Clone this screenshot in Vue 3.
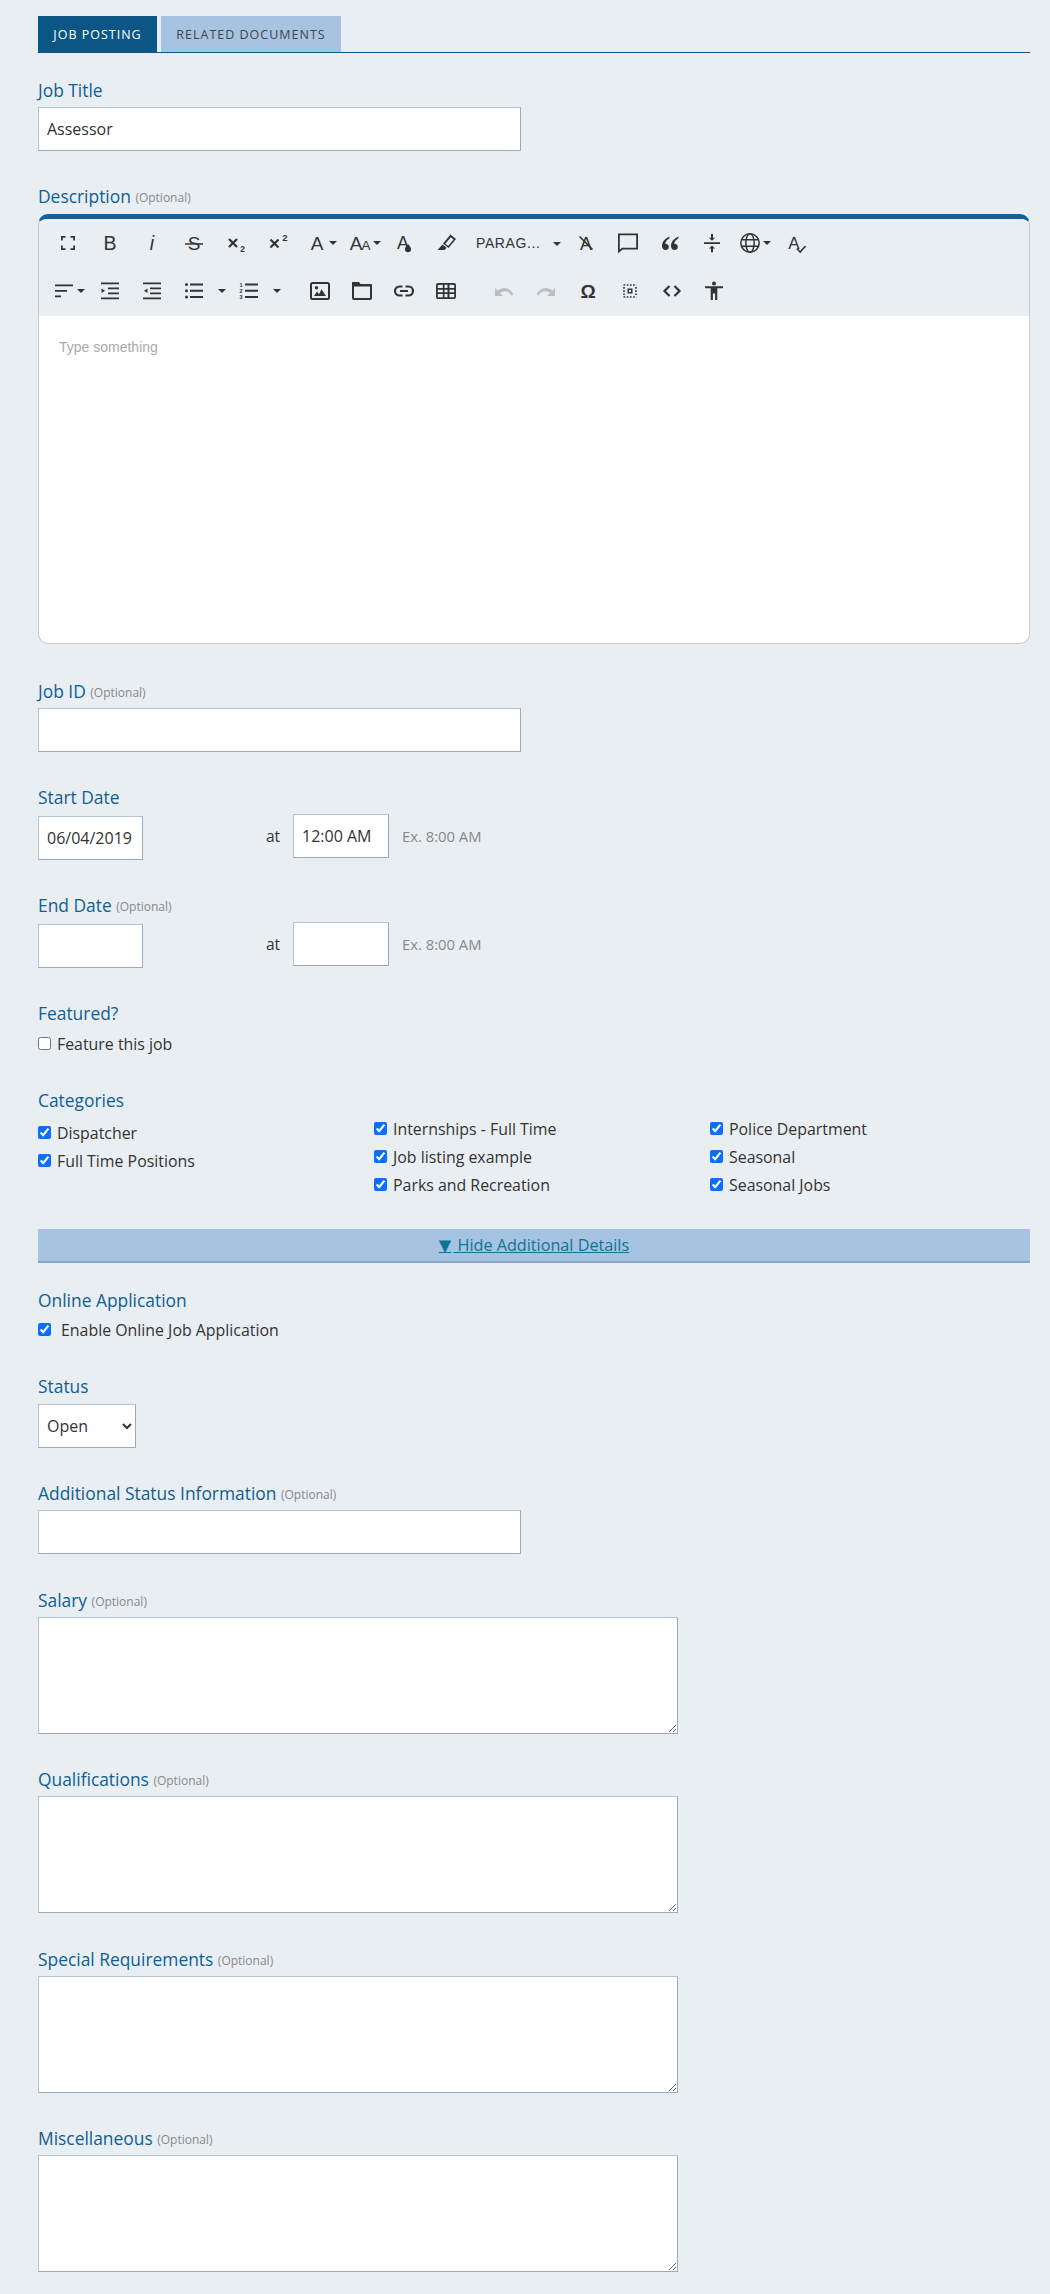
<script setup>
const cols = [
  { cls: 'col-a', items: ['Dispatcher', 'Full Time Positions'] },
  { cls: 'col-b', items: ['Internships - Full Time', 'Job listing example', 'Parks and Recreation'] },
  { cls: 'col-b', items: ['Police Department', 'Seasonal', 'Seasonal Jobs'] },
]
const areas = ['Salary', 'Qualifications', 'Special Requirements', 'Miscellaneous']
</script>

<template>
  <main class="page">
    <nav class="tabs">
      <a class="tab active">JOB POSTING</a>
      <a class="tab">RELATED DOCUMENTS</a>
    </nav>

    <section class="field f-title">
      <label class="lab">Job Title</label>
      <input class="inp wide" value="Assessor" />
    </section>

    <section class="field f-desc">
      <label class="lab">Description <small>(Optional)</small></label>
      <div class="editor">
        <div class="toolbar">
          <div class="tb-row">
            <span class="btn"><svg viewBox="0 0 24 24"><path d="M5 9.500V5h4.500v1.800H6.800v2.700zM14.500 5H19v4.500h-1.800V6.800h-2.700zM5 14.500h1.800v2.700h2.700V19H5zM17.200 14.500H19V19h-4.500v-1.800h2.700z"/></svg></span>
            <span class="btn"><svg viewBox="0 0 24 24"><text x="12" y="19" class="g" font-size="19.500">B</text></svg></span>
            <span class="btn"><svg viewBox="0 0 24 24"><text x="12" y="19" class="g" font-size="19.500" font-style="italic">i</text></svg></span>
            <span class="btn"><svg viewBox="0 0 24 24"><text x="12" y="19" class="g" font-size="19">S</text><rect x="3" y="12.200" width="18" height="1.500"/></svg></span>
            <span class="btn w43"><svg viewBox="0 0 24 24"><path class="st" d="M4 8l8 8M12 8l-8 8"/><text x="17.500" y="20.500" class="g" font-size="8.500" font-weight="700">2</text></svg></span>
            <span class="btn"><svg viewBox="0 0 24 24"><path class="st" d="M3.500 8.500l8 8M11.500 8.500l-8 8"/><text x="17.800" y="10" class="g" font-size="9.500" font-weight="700">2</text></svg></span>
            <span class="btn dd a-dd"><svg viewBox="0 0 24 24"><text x="12" y="19" class="g" font-size="19">A</text></svg><i class="caret"></i></span>
            <span class="btn dd aa-dd"><svg viewBox="0 0 24 24"><text x="9" y="19" class="g" font-size="19">A</text><text x="19" y="19" class="g" font-size="13.500">A</text></svg><i class="caret"></i></span>
            <span class="btn"><svg viewBox="0 0 24 24"><text x="11" y="17.500" class="g" font-size="18">A</text><path d="M16 13c1.400 2 3 3.200 3 5.200a3 3 0 0 1-6 0c0-2 1.600-3.200 3-5.200z"/></svg></span>
            <span class="btn"><svg viewBox="0 0 24 24"><path d="M16.500 3.500l5.500 4.500-7.500 9-5.500-4.500zm.3 2.800l-5.500 6.400 2.900 2.400 5.400-6.500zM8.500 13.500l4 3.300-1.800 2.200H3.500z"/></svg></span>
            <span class="para">PARAG...<i class="caret"></i></span>
            <span class="btn"><svg viewBox="0 0 24 24"><text x="12" y="19" class="g" font-size="18">A</text><path class="st thin" d="M5.500 5.500l13 13"/></svg></span>
            <span class="btn"><svg viewBox="0 0 24 24"><path d="M2 2.500h20v16H6.800L2 22.300zm1.800 1.800v14.200l2.300-1.800h14.100V4.300z"/></svg></span>
            <span class="btn"><svg viewBox="0 0 24 24"><path d="M11.500 5.500C7.800 7.200 4 10.300 4 14.800c0 2.500 1.400 4.200 3.500 4.200 1.900 0 3.300-1.300 3.300-3.100s-1.400-3.100-3.300-3.100h-.4c.4-2.100 1.800-4 4.400-5.600zM20.500 5.500c-3.700 1.700-7.500 4.800-7.500 9.300 0 2.500 1.400 4.200 3.500 4.200 1.900 0 3.300-1.300 3.300-3.100s-1.400-3.100-3.300-3.100h-.4c.4-2.100 1.800-4 4.400-5.600z"/></svg></span>
            <span class="btn"><svg viewBox="0 0 24 24"><path d="M4 11.200h16V13H4zM12 9.800L9 6.800h2V3h2v3.800h2zM12 14.400l3 3h-2v3.800h-2v-3.800H9z"/></svg></span>
            <span class="btn dd globe"><svg viewBox="0 0 24 24"><circle class="ln" cx="12" cy="12" r="9.200"/><ellipse class="ln" cx="12" cy="12" rx="4.200" ry="9.200"/><path class="ln" d="M3.500 8.800h17M3.500 15.200h17"/></svg><i class="caret sm"></i></span>
            <span class="btn"><svg viewBox="0 0 24 24"><text x="10" y="18" class="g" font-size="17">A</text><path class="st thin" d="M12.800 17.500l3.400 3.500 5.300-6"/></svg></span>
          </div>
          <div class="tb-row">
            <span class="btn dd align"><svg viewBox="0 0 24 24"><path d="M3 5.500h18v1.700H3zM3 11h12v1.700H3zM3 16.500h6v1.700H3z"/></svg><i class="caret"></i></span>
            <span class="btn"><svg viewBox="0 0 24 24"><path d="M3 3.500h18v1.700H3zM10 8.500h11v1.700H10zM10 13.500h11v1.700H10zM3 18.500h18v1.700H3zM3.500 9.500l3.500 2.300-3.500 2.300z"/></svg></span>
            <span class="btn"><svg viewBox="0 0 24 24"><path d="M3 3.500h18v1.700H3zM10 8.500h11v1.700H10zM10 13.500h11v1.700H10zM3 18.500h18v1.700H3zM7.500 9.500L4 11.800l3.500 2.300z"/></svg></span>
            <span class="btn dd list"><svg viewBox="0 0 24 24"><path d="M8 4.500h13v2H8zM8 10.800h13v2H8zM8 17h13v2H8z"/><circle cx="4.500" cy="5.500" r="1.500"/><circle cx="4.500" cy="11.800" r="1.500"/><circle cx="4.500" cy="18" r="1.500"/></svg><i class="caret"></i></span>
            <span class="btn dd list"><svg viewBox="0 0 24 24"><path d="M8 4.500h13v2H8zM8 10.800h13v2H8zM8 17h13v2H8z"/><text x="4" y="8" class="g" font-size="5.500" font-weight="700">1</text><text x="4" y="14" class="g" font-size="5.500" font-weight="700">2</text><text x="4" y="20" class="g" font-size="5.500" font-weight="700">3</text></svg><i class="caret"></i></span>
            <span class="sp16"></span>
            <span class="btn"><svg viewBox="0 0 24 24"><path d="M4.500 3h15A2.500 2.500 0 0 1 22 5.500v13a2.500 2.500 0 0 1-2.500 2.500h-15A2.500 2.500 0 0 1 2 18.500v-13A2.500 2.500 0 0 1 4.500 3zm0 2a.5.5 0 0 0-.5.5v13c0 .3.200.5.5.5h15a.5.5 0 0 0 .5-.5v-13a.5.5 0 0 0-.5-.5zM6 17l3-4.500 2 2.700 2.500-5 4.500 6.800zM8.500 7a1.700 1.700 0 1 1 0 3.400 1.700 1.700 0 0 1 0-3.400z"/></svg></span>
            <span class="btn"><svg viewBox="0 0 24 24"><path d="M2 3h7l1.500 2H21a1 1 0 0 1 1 1v13a2 2 0 0 1-2 2H4a2 2 0 0 1-2-2zm2 4.500V19h16V7.500z"/></svg></span>
            <span class="btn"><svg viewBox="0 0 24 24"><path class="st nofill" d="M10.500 7.500h-3a4.500 4.500 0 0 0 0 9h3M13.500 7.500h3a4.500 4.500 0 0 1 0 9h-3M8 12h8"/></svg></span>
            <span class="btn"><svg viewBox="0 0 24 24"><path d="M4 4h16a2 2 0 0 1 2 2v12a2 2 0 0 1-2 2H4a2 2 0 0 1-2-2V6a2 2 0 0 1 2-2zm-.2 2v3h5V5.800zm6.700-.2V9h3V5.800zm5 0V9h4.700V6zM3.800 10.800v2.500h5v-2.500zm6.700 0v2.500h3v-2.500zm5 0v2.500h4.700v-2.500zM3.800 15v3.200h5V15zm6.700 0v3.200h3V15zm5 0v3.200h4.700V15z"/></svg></span>
            <span class="sp16"></span>
            <span class="btn off"><svg viewBox="0 0 24 24"><path d="M12.500 9c-2.700 0-5 1-7 2.600L3 9v8h8l-3-3c1.400-1.100 3-1.800 4.800-1.800 2.900 0 5.400 1.600 6.700 4.300l1.900-1C19.600 12 16.300 9 12.500 9z"/></svg></span>
            <span class="btn off"><svg viewBox="0 0 24 24"><path d="M11.500 9c2.700 0 5 1 7 2.600L21 9v8h-8l3-3c-1.400-1.100-3-1.800-4.800-1.800-2.900 0-5.400 1.600-6.700 4.300l-1.900-1C4.400 12 7.700 9 11.500 9z"/></svg></span>
            <span class="btn"><svg viewBox="0 0 24 24"><text x="12" y="19" class="g" font-size="19" font-weight="700">Ω</text></svg></span>
            <span class="btn"><svg viewBox="0 0 24 24"><path d="M9.500 9.500h5v5h-5zm1.500 1.500v2h2v-2z"/><path class="dots" d="M5.500 6h13M5.500 18h13M6 8v8M18 8v8"/></svg></span>
            <span class="btn"><svg viewBox="0 0 24 24"><path class="st nofill" d="M9.500 7l-5 5 5 5M14.500 7l5 5-5 5"/></svg></span>
            <span class="btn"><svg viewBox="0 0 24 24"><circle cx="12" cy="4.500" r="2"/><path d="M3 7.300h18v2h-5.700V21h-2.200v-6.500h-2.200V21H8.700V9.300H3z"/></svg></span>
          </div>
        </div>
        <div class="body">Type something</div>
      </div>
    </section>

    <section class="field f-jobid">
      <label class="lab">Job ID <small>(Optional)</small></label>
      <input class="inp wide" />
    </section>

    <section class="field f-date">
      <label class="lab">Start Date</label>
      <div class="date-row">
        <input class="inp date" value="06/04/2019" />
        <span class="at">at</span>
        <input class="inp time" value="12:00 AM" />
        <span class="ex">Ex. 8:00 AM</span>
      </div>
    </section>

    <section class="field f-date">
      <label class="lab">End Date <small>(Optional)</small></label>
      <div class="date-row">
        <input class="inp date" />
        <span class="at">at</span>
        <input class="inp time" />
        <span class="ex">Ex. 8:00 AM</span>
      </div>
    </section>

    <section class="field f-feat">
      <label class="lab">Featured?</label>
      <label class="chk"><input type="checkbox" />Feature this job</label>
    </section>

    <section class="field f-cats">
      <label class="lab">Categories</label>
      <div class="cats">
        <div v-for="c in cols" :key="c.items[0]" :class="['col', c.cls]">
          <label v-for="it in c.items" :key="it" class="chk"><input type="checkbox" checked />{{ it }}</label>
        </div>
      </div>
    </section>

    <div class="bar"><a><span class="tri">▼</span> Hide Additional Details</a></div>

    <section class="field f-online">
      <label class="lab">Online Application</label>
      <label class="chk wide-gap"><input type="checkbox" checked />Enable Online Job Application</label>
    </section>

    <section class="field f-status">
      <label class="lab">Status</label>
      <select class="inp sel"><option>Open</option></select>
    </section>

    <section class="field f-addl">
      <label class="lab">Additional Status Information <small>(Optional)</small></label>
      <input class="inp wide" />
    </section>

    <section v-for="a in areas" :key="a" class="field f-area">
      <label class="lab">{{ a }} <small>(Optional)</small></label>
      <textarea class="inp area"></textarea>
    </section>
  </main>
</template>

<style>
html, body { margin: 0; background: #e9eef2; }
</style>

<style scoped>
.page {
  box-sizing: border-box;
  width: 1050px;
  height: 2294px;
  overflow: hidden;
  padding: 16px 20px 0 38px;
  background: #e9eef2;
  font-family: "Open Sans", Lato, sans-serif;
  font-size: 16px;
  color: #333;
}
.tabs {
  display: flex;
  gap: 4px;
  height: 36px;
  border-bottom: 1px solid #0b5685;
}
.tab {
  display: flex;
  align-items: center;
  justify-content: center;
  font-size: 12.500px;
  letter-spacing: 1px;
  color: #444;
  background: #a6c3e1;
  width: 180px;
}
.tab.active { background: #0b5685; color: #fff; width: 119px; }
.field { display: block; }
.lab {
  display: block;
  color: #0f5f94;
  font-size: 17.400px;
  line-height: 22px;
  padding-bottom: 2px;
  margin-bottom: 4px;
}
.lab small { font-size: 12px; line-height: 1; color: #888; vertical-align: 1px; }
.inp {
  display: block;
  box-sizing: border-box;
  height: 44px;
  border: 1px solid #b4c4d6;
  border-right-color: #9aa9bb;
  border-bottom-color: #9aa9bb;
  background: #fff;
  padding: 0 8px;
  font-family: inherit;
  font-size: 16px;
  color: #333;
  border-radius: 0;
  outline: none;
}
.wide { width: 483px; }
.f-title { margin-top: 26px; }
.f-desc { margin-top: 34px; }
.f-desc .lab { margin-bottom: 5px; }
.editor {
  width: 992px;
  height: 430px;
  box-sizing: border-box;
  border: 1px solid #ccc;
  border-top: 5px solid #10629f;
  border-radius: 10px;
  background: #fff;
  overflow: hidden;
}
.toolbar { height: 97px; background: #e9eef2; }
.tb-row { display: flex; height: 48px; padding-left: 8px; }
.btn { display: flex; align-items: center; justify-content: center; width: 42px; height: 48px; flex: none; }
.btn svg { width: 24px; height: 24px; flex: none; fill: #333; }
.w43 { width: 43px; }
.off svg { fill: #bdbdbd; }
.g { font-family: "Liberation Sans", sans-serif; text-anchor: middle; fill: #333; }
.st { fill: none; stroke: #333; stroke-width: 2.200; }
.st.thin { stroke-width: 1.600; }
.ln { fill: none; stroke: #333; stroke-width: 1.500; }
.dots { fill: none; stroke: #333; stroke-width: 1.600; stroke-dasharray: 1.700 1.500; }
.dd { position: relative; }
.caret {
  position: absolute;
  right: 2px;
  top: 22px;
  width: 0;
  height: 0;
  border: 4px solid transparent;
  border-top: 4px solid #333;
  border-bottom: 0;
}
.a-dd { width: 39px; }
.a-dd svg { margin-right: 5px; }
.aa-dd { width: 44px; }
.aa-dd svg { margin-right: 4px; }
.align svg, .globe svg { margin-right: 8px; }
.align .caret, .globe .caret { right: 4px; }
.dd.list { width: 55px; }
.dd.list svg { margin-right: 13px; }
.para {
  position: relative;
  align-self: center;
  width: 98px;
  flex: none;
  box-sizing: border-box;
  padding-left: 9px;
  font-family: "Liberation Sans", sans-serif;
  font-size: 14px;
  letter-spacing: .6px;
  color: #333;
}
.para .caret { top: 7px; right: 4px; }
.sp16 { width: 16px; flex: none; }
.body {
  padding: 20px 20px;
  font-family: "Liberation Sans", Arial, sans-serif;
  font-size: 14px;
  line-height: 22px;
  color: #aaa;
}
.f-jobid { margin-top: 36px; }
.date-row { display: flex; align-items: center; height: 44px; }
.date { width: 105px; flex: none; }
.time { width: 96px; flex: none; margin-top: -4px; }
.at { margin: -4px 0 0 123px; width: 27px; flex: none; font-size: 15.500px; }
.ex { margin: -4px 0 0 13px; font-size: 14.800px; color: #888; }
.f-date { margin-top: 34px; }
.f-date .lab { margin-bottom: 6px; }
.chk { display: flex; align-items: center; height: 28px; font-size: 15.900px; color: #333; }
.chk input { width: 13px; height: 13px; margin: 0 6px 0 0; flex: none; accent-color: #0b6efd; }
.f-feat { margin-top: 34px; }
.f-feat .lab { margin-bottom: 3.500px; }
.f-cats { margin-top: 31.500px; }
.f-cats .lab { margin-bottom: 0; }
.cats { display: flex; }
.col { width: 336px; flex: none; }
.col-a { padding-top: 5.500px; }
.col-b { padding-top: 1.500px; }
.bar {
  box-sizing: border-box;
  width: 992px;
  height: 34px;
  margin-top: 30.500px;
  background: #a6c3e1;
  border-bottom: 2px solid #8ca6c4;
  text-align: center;
  line-height: 32px;
  font-size: 16.200px;
  color: #0f7398;
  text-decoration: underline;
}
.tri { font-family: "DejaVu Sans", sans-serif; margin-right: 2px; }
.f-online { margin-top: 26px; }
.f-online .lab { margin-bottom: 2.500px; }
.wide-gap input { margin-right: 10px; }
.f-status { margin-top: 31.500px; }
.f-status .lab { margin-bottom: 5px; }
.sel { width: 98px; padding-left: 4px; }
.f-addl { margin-top: 34px; }
.f-area { margin-top: 34.500px; }
.area { width: 640px; height: 117px; resize: both; }
</style>
